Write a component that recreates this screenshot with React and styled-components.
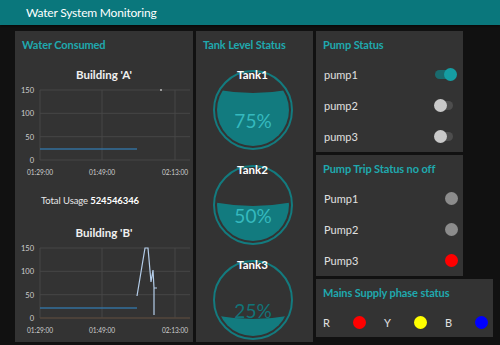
import React from "react";
import styled, { createGlobalStyle } from "styled-components";

const GlobalStyle = createGlobalStyle`
  body {
    margin: 0;
    background: #111111;
    font-family: Lato, "Open Sans", sans-serif;
    color: #e6e6e6;
  }
`;

const Page = styled.div`
  width: 500px;
  height: 345px;
  overflow: hidden;
  background: #111111;
`;

const Header = styled.header`
  height: 25px;
  background: #0a777c;
  color: #ffffff;
  font-size: 12px;
  letter-spacing: -0.2px;
  line-height: 25px;
  padding-left: 26px;
  box-shadow: 0 1px 3px rgba(0, 0, 0, 0.6);
`;

const Main = styled.main`
  display: flex;
  align-items: flex-start;
  gap: 3px;
  padding: 6px 0 0 15px;
`;

const Column = styled.div`
  display: flex;
  flex-direction: column;
  align-items: flex-start;
  gap: 3px;
`;

const Panel = styled.section`
  width: ${(p) => p.$w}px;
  height: ${(p) => p.$h}px;
  background: #333333;
  box-sizing: border-box;
  overflow: hidden;
  display: flex;
  flex-direction: column;
`;

const GroupTitle = styled.h2`
  margin: 0;
  height: 28px;
  line-height: 28px;
  padding-left: 7px;
  font-size: 11px;
  font-weight: 700;
  letter-spacing: -0.1px;
  color: #1fa9ae;
  white-space: nowrap;
`;

const ChartTitle = styled.div`
  margin-top: ${(p) => p.$mt}px;
  height: 20px;
  line-height: 20px;
  text-align: center;
  font-size: 11.5px;
  font-weight: 700;
  color: #f0f0f0;
`;

const Usage = styled.div`
  margin-top: 12px;
  height: 20px;
  line-height: 20px;
  font-size: 9.5px;
  letter-spacing: -0.1px;
  color: #e6e6e6;
  text-align: center;
  padding-right: 28px;

  b {
    font-weight: 700;
    color: #ffffff;
  }
`;

const TankStack = styled.div`
  display: flex;
  flex-direction: column;
  align-items: center;
  gap: 13px;
  padding-top: 9px;
  padding-right: 4px;
`;

const Tank = styled.div`
  display: flex;
  flex-direction: column;
  align-items: center;
`;

const TankLabel = styled.div`
  position: relative;
  z-index: 1;
  height: 14px;
  line-height: 14px;
  margin-bottom: -12px;
  font-size: 11.5px;
  font-weight: 700;
  color: #ffffff;
`;

const Row = styled.div`
  display: flex;
  align-items: center;
  justify-content: space-between;
  height: ${(p) => p.$h}px;
  padding: 0 ${(p) => p.$pr}px 0 8px;
  font-size: 11px;
  color: #e0e0e0;
`;

const Track = styled.div`
  position: relative;
  width: 18px;
  height: 9px;
  border-radius: 5px;
  background: ${(p) => (p.$on ? "#1a6a6d" : "#4d4d4d")};
`;

const Knob = styled.div`
  position: absolute;
  top: -2px;
  left: ${(p) => (p.$on ? "9px" : "-1px")};
  width: 13px;
  height: 13px;
  border-radius: 50%;
  background: ${(p) => (p.$on ? "#159da2" : "#c9c9c9")};
`;

const Led = styled.span`
  display: block;
  width: 13px;
  height: 13px;
  border-radius: 50%;
  background: ${(p) => p.$color};
`;

const PhaseRow = styled.div`
  display: flex;
  align-items: center;
  gap: 18px;
  height: 30px;
  padding-left: 7px;
  font-size: 11px;
  color: #e0e0e0;
`;

const Phase = styled.div`
  display: flex;
  align-items: center;
  justify-content: space-between;
  width: 43px;
`;

function Toggle({ on }) {
  return (
    <Track $on={on}>
      <Knob $on={on} />
    </Track>
  );
}

const GRID = "#474747";
const LABEL = "#cfcfcf";
const xTicks = [
  [25, "01:29:00"],
  [87, "01:49:00"],
  [160, "02:13:00"],
];
const yTicks = [
  [5, "150"],
  [28.3, "100"],
  [51.7, "50"],
  [75, "0"],
];

function Chart({ children }) {
  return (
    <svg width="178" height="94" style={{ display: "block" }}>
      {yTicks.map(([y, t]) => (
        <g key={t}>
          <line x1="25" x2="175" y1={y} y2={y} stroke={GRID} strokeWidth="1" />
          <text x="19" y={y + 3} fill={LABEL} fontSize="7.5" textAnchor="end" fontFamily="Lato, sans-serif">
            {t}
          </text>
        </g>
      ))}
      {xTicks.map(([x, t]) => (
        <g key={t}>
          <line x1={x} x2={x} y1="5" y2="75" stroke={GRID} strokeWidth="1" />
          <text
            x={x}
            y="90"
            fill={LABEL}
            fontSize="7.5"
            textAnchor="middle"
            textLength="26"
            lengthAdjust="spacingAndGlyphs"
            fontFamily="Lato, sans-serif"
          >
            {t}
          </text>
        </g>
      ))}
      {children}
    </svg>
  );
}

function TankGauge({ level }) {
  const r = 36;
  const cy = 40;
  const surface = cy + r - level * 2 * r;
  const wave = `M0,${surface - 3} Q40,${surface + 5} 80,${surface - 3} L80,80 L0,80 Z`;
  const id = `clip${Math.round(level * 100)}`;
  const textY = 58;
  return (
    <svg width="80" height="80" style={{ display: "block" }}>
      <defs>
        <clipPath id={id}>
          <circle cx="40" cy={cy} r={r} />
        </clipPath>
        <clipPath id={id + "w"}>
          <path d={wave} />
        </clipPath>
      </defs>
      <circle cx="40" cy={cy} r="39" fill="none" stroke="#137b7f" strokeWidth="2" />
      <text x="40" y={textY} textAnchor="middle" fontSize="19" fill="#117478" fontFamily="Lato, sans-serif">
        {Math.round(level * 100)}%
      </text>
      <g clipPath={`url(#${id})`}>
        <path d={wave} fill="#127b7f" />
      </g>
      <g clipPath={`url(#${id}w)`}>
        <text x="40" y={textY} textAnchor="middle" fontSize="19" fill="#35b9be" fontFamily="Lato, sans-serif">
          {Math.round(level * 100)}%
        </text>
      </g>
    </svg>
  );
}

const pumps = [
  ["pump1", true],
  ["pump2", false],
  ["pump3", false],
];

const trips = [
  ["Pump1", "#8c8c8c"],
  ["Pump2", "#8c8c8c"],
  ["Pump3", "#ff0000"],
];

const phases = [
  ["R", "#ff0000"],
  ["Y", "#ffff00"],
  ["B", "#0000ff"],
];

export default function App() {
  return (
    <Page>
      <GlobalStyle />
      <Header>Water System Monitoring</Header>
      <Main>
        <Panel $w={178} $h={311}>
          <GroupTitle>Water Consumed</GroupTitle>
          <ChartTitle $mt={6}>Building 'A'</ChartTitle>
          <Chart>
            <line x1="25" x2="122" y1="64" y2="64" stroke="#33709e" strokeWidth="1.5" />
            <circle cx="146" cy="5" r="1" fill="#bbbbbb" />
          </Chart>
          <Usage>
            Total Usage <b>524546346</b>
          </Usage>
          <ChartTitle $mt={12}>Building 'B'</ChartTitle>
          <Chart>
            <line x1="25" x2="175" y1="75" y2="75" stroke="#5a4636" strokeWidth="1" />
            <line x1="25" x2="122" y1="65" y2="65" stroke="#33709e" strokeWidth="1.5" />
            <path
              d="M122,53 L130,5 L133,5 L136,39 L138,27 L139,45 L139,72 M139,45 L142,45"
              fill="none"
              stroke="#b4cde9"
              strokeWidth="1.2"
            />
          </Chart>
        </Panel>

        <Panel $w={117} $h={311}>
          <GroupTitle>Tank Level Status</GroupTitle>
          <TankStack>
            {[
              ["Tank1", 0.75],
              ["Tank2", 0.5],
              ["Tank3", 0.25],
            ].map(([name, lvl]) => (
              <Tank key={name}>
                <TankLabel>{name}</TankLabel>
                <TankGauge level={lvl} />
              </Tank>
            ))}
          </TankStack>
        </Panel>

        <Column>
          <Panel $w={147} $h={121}>
            <GroupTitle>Pump Status</GroupTitle>
            {pumps.map(([name, on]) => (
              <Row key={name} $h={32} $pr={10}>
                {name}
                <Toggle on={on} />
              </Row>
            ))}
          </Panel>
          <Panel $w={147} $h={121}>
            <GroupTitle>Pump Trip Status no off</GroupTitle>
            {trips.map(([name, color]) => (
              <Row key={name} $h={31} $pr={5}>
                {name}
                <Led $color={color} />
              </Row>
            ))}
          </Panel>
          <Panel $w={177} $h={58}>
            <GroupTitle>Mains Supply phase status</GroupTitle>
            <PhaseRow>
              {phases.map(([name, color]) => (
                <Phase key={name}>
                  {name}
                  <Led $color={color} />
                </Phase>
              ))}
            </PhaseRow>
          </Panel>
        </Column>
      </Main>
    </Page>
  );
}
